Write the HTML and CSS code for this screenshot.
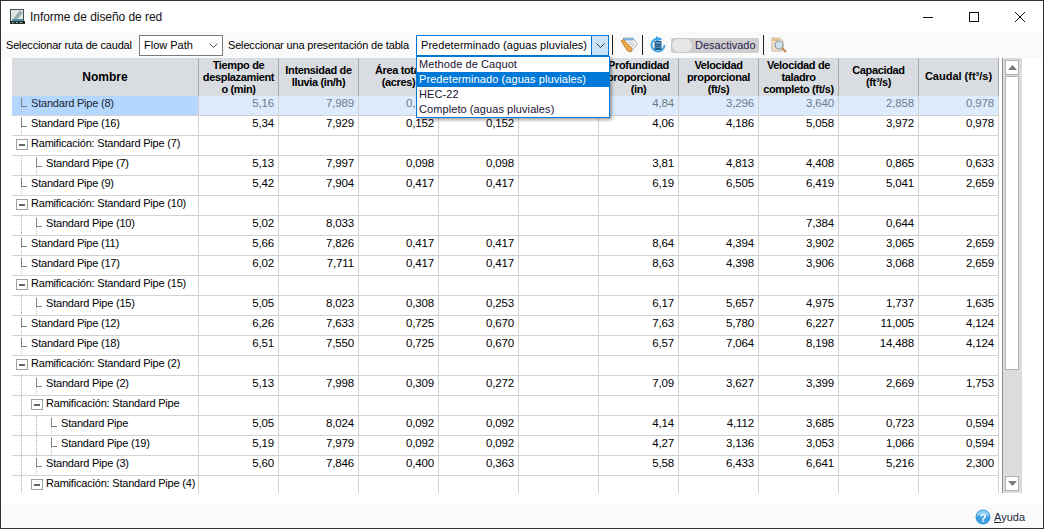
FILE: index.html
```html
<!DOCTYPE html>
<html lang="es">
<head>
<meta charset="utf-8">
<title>Informe de diseño de red</title>
<link rel="stylesheet" href="styles.css">
</head>
<body>
<div class="window">
  <header class="titlebar">
    <svg class="appicon" width="16" height="16" viewBox="0 0 16 16"><rect x=".5" y=".5" width="13" height="14" fill="#dfe4e4" stroke="#4a4f50"/><path d="M3 11 10 2l2 2-6 7z" fill="#9fb2b8" stroke="#6c7a80" stroke-width=".6"/><rect x="2" y="10" width="11" height="2" fill="#4f93a8"/><rect x="0" y="12" width="15" height="3" fill="#26302f"/><path d="M2 13.500h2m2 0h2m2 0h2" stroke="#8fb09c"/></svg>
    <span class="title">Informe de diseño de red</span>
    <div class="winctl">
      <span class="wbtn"><svg width="12" height="12" viewBox="0 0 12 12"><path d="M1 6.500h10" stroke="#111"/></svg></span>
      <span class="wbtn"><svg width="12" height="12" viewBox="0 0 12 12"><rect x="1.500" y="1.500" width="9" height="9" fill="none" stroke="#111"/></svg></span>
      <span class="wbtn"><svg width="12" height="12" viewBox="0 0 12 12"><path d="M1 1l10 10M11 1 1 11" stroke="#111"/></svg></span>
    </div>
  </header>
  <div class="toolbar">
    <span class="lbl l1">Seleccionar ruta de caudal</span>
    <div class="combo c1"><span>Flow Path</span><svg width="9" height="5" viewBox="0 0 9 5"><path d="M.5.500 4.500 4.500 8.500.500" fill="none" stroke="#555"/></svg></div>
    <span class="lbl l2">Seleccionar una presentación de tabla</span>
    <div class="combo c2"><span class="cval">Predeterminado (aguas pluviales)</span><b class="arrow"><svg width="9" height="5" viewBox="0 0 9 5"><path d="M.5.500 4.500 4.500 8.500.500" fill="none" stroke="#333"/></svg></b></div>
    <i class="sep s1"></i>
    <svg class="ico i1" width="18" height="18" viewBox="0 0 18 18"><path d="M3 2h10l4.500 6-5.500 7-5-2z" fill="#f6f4ee" stroke="#a9a99e" stroke-width=".8"/><path d="M3 2h10l1.500 2.500H4z" fill="#7fb2dc"/><path d="M8 6.500h6M9.500 8.500h5.500M11 10.500h3" stroke="#b8c4cf" stroke-width=".8"/><path d="M1 5l2.500-1.500L12 12.500l-1 3.500-3.500-1z" fill="#eda94a" stroke="#b36d22" stroke-width=".7"/></svg>
    <i class="sep s2"></i>
    <svg class="ico i2" width="16" height="18" viewBox="0 0 16 18"><path d="M11.500 3.500A6.500 6.500 0 1 0 14.500 9" fill="none" stroke="#3fa3e6" stroke-width="2"/><path d="M6 0l5 3.500-5 2.500z" fill="#3fa3e6"/><rect x="4.500" y="5" width="7" height="9" fill="#1f5c8c"/><path d="M5.500 7h5" stroke="#a9d0ea"/><path d="M5.500 9.500h5M5.500 11.500h5" stroke="#7fb0d0" stroke-dasharray="1 1"/></svg>
    <div class="toggle"><span class="knob"></span><span class="tlabel">Desactivado</span></div>
    <i class="sep s3"></i>
    <svg class="ico i3" width="18" height="18" viewBox="0 0 18 18"><path d="M2 2h8l3 3v10H2z" fill="#f2e4cf" stroke="#c4a988" stroke-width=".8"/><path d="M3 4h6" stroke="#e2b06e" stroke-width="1.500"/><circle cx="9" cy="9" r="4" fill="#cfe4ea" stroke="#8d9ba3" stroke-width="1.200"/><path d="M12 12l4 4" stroke="#c08a50" stroke-width="2"/></svg>
  </div>
  <div class="content">
    <div class="gridwrap">
      <table class="grid">
        <colgroup><col class="cn"><col class="cv"><col class="cv"><col class="cv"><col class="cv"><col class="cv"><col class="cv"><col class="cv"><col class="cv"><col class="cv"><col class="cv"></colgroup>
        <thead><tr>
          <th class="hn">Nombre</th><th class="h3">Tiempo de desplazamient o (min)</th><th>Intensidad de lluvia (in/h)</th><th>Área total (acres)</th><th></th><th></th><th class="h3">Profundidad proporcional (in)</th><th class="h3">Velocidad proporcional (ft/s)</th><th class="h3">Velocidad de taladro completo (ft/s)</th><th>Capacidad (ft³/s)</th><th class="hc">Caudal (ft³/s)</th>
        </tr></thead>
        <tbody>
          <tr class="sel"><td class="n"><div class="tree"><i class="el"></i>Standard Pipe (8)</div></td><td>5,16</td><td>7,989</td><td>0,152</td><td></td><td></td><td>4,84</td><td>3,296</td><td>3,640</td><td>2,858</td><td>0,978</td></tr>
          <tr><td class="n"><div class="tree"><i class="el"></i>Standard Pipe (16)</div></td><td>5,34</td><td>7,929</td><td>0,152</td><td>0,152</td><td></td><td>4,06</td><td>4,186</td><td>5,058</td><td>3,972</td><td>0,978</td></tr>
          <tr><td class="n"><div class="tree"><i class="mn"></i>Ramificación: Standard Pipe (7)</div></td><td></td><td></td><td></td><td></td><td></td><td></td><td></td><td></td><td></td><td></td></tr>
          <tr><td class="n"><div class="tree"><i class="dt"></i><i class="el"></i>Standard Pipe (7)</div></td><td>5,13</td><td>7,997</td><td>0,098</td><td>0,098</td><td></td><td>3,81</td><td>4,813</td><td>4,408</td><td>0,865</td><td>0,633</td></tr>
          <tr><td class="n"><div class="tree"><i class="el"></i>Standard Pipe (9)</div></td><td>5,42</td><td>7,904</td><td>0,417</td><td>0,417</td><td></td><td>6,19</td><td>6,505</td><td>6,419</td><td>5,041</td><td>2,659</td></tr>
          <tr><td class="n"><div class="tree"><i class="mn"></i>Ramificación: Standard Pipe (10)</div></td><td></td><td></td><td></td><td></td><td></td><td></td><td></td><td></td><td></td><td></td></tr>
          <tr><td class="n"><div class="tree"><i class="dt"></i><i class="el"></i>Standard Pipe (10)</div></td><td>5,02</td><td>8,033</td><td></td><td></td><td></td><td></td><td></td><td>7,384</td><td>0,644</td><td></td></tr>
          <tr><td class="n"><div class="tree"><i class="el"></i>Standard Pipe (11)</div></td><td>5,66</td><td>7,826</td><td>0,417</td><td>0,417</td><td></td><td>8,64</td><td>4,394</td><td>3,902</td><td>3,065</td><td>2,659</td></tr>
          <tr><td class="n"><div class="tree"><i class="el"></i>Standard Pipe (17)</div></td><td>6,02</td><td>7,711</td><td>0,417</td><td>0,417</td><td></td><td>8,63</td><td>4,398</td><td>3,906</td><td>3,068</td><td>2,659</td></tr>
          <tr><td class="n"><div class="tree"><i class="mn"></i>Ramificación: Standard Pipe (15)</div></td><td></td><td></td><td></td><td></td><td></td><td></td><td></td><td></td><td></td><td></td></tr>
          <tr><td class="n"><div class="tree"><i class="dt"></i><i class="el"></i>Standard Pipe (15)</div></td><td>5,05</td><td>8,023</td><td>0,308</td><td>0,253</td><td></td><td>6,17</td><td>5,657</td><td>4,975</td><td>1,737</td><td>1,635</td></tr>
          <tr><td class="n"><div class="tree"><i class="el"></i>Standard Pipe (12)</div></td><td>6,26</td><td>7,633</td><td>0,725</td><td>0,670</td><td></td><td>7,63</td><td>5,780</td><td>6,227</td><td>11,005</td><td>4,124</td></tr>
          <tr><td class="n"><div class="tree"><i class="el"></i>Standard Pipe (18)</div></td><td>6,51</td><td>7,550</td><td>0,725</td><td>0,670</td><td></td><td>6,57</td><td>7,064</td><td>8,198</td><td>14,488</td><td>4,124</td></tr>
          <tr><td class="n"><div class="tree"><i class="mn"></i>Ramificación: Standard Pipe (2)</div></td><td></td><td></td><td></td><td></td><td></td><td></td><td></td><td></td><td></td><td></td></tr>
          <tr><td class="n"><div class="tree"><i class="dt"></i><i class="el"></i>Standard Pipe (2)</div></td><td>5,13</td><td>7,998</td><td>0,309</td><td>0,272</td><td></td><td>7,09</td><td>3,627</td><td>3,399</td><td>2,669</td><td>1,753</td></tr>
          <tr><td class="n"><div class="tree"><i class="dt"></i><i class="mn"></i>Ramificación: Standard Pipe</div></td><td></td><td></td><td></td><td></td><td></td><td></td><td></td><td></td><td></td><td></td></tr>
          <tr><td class="n"><div class="tree"><i class="dt"></i><i class="dt"></i><i class="el"></i>Standard Pipe</div></td><td>5,05</td><td>8,024</td><td>0,092</td><td>0,092</td><td></td><td>4,14</td><td>4,112</td><td>3,685</td><td>0,723</td><td>0,594</td></tr>
          <tr><td class="n"><div class="tree"><i class="dt"></i><i class="dt"></i><i class="el"></i>Standard Pipe (19)</div></td><td>5,19</td><td>7,979</td><td>0,092</td><td>0,092</td><td></td><td>4,27</td><td>3,136</td><td>3,053</td><td>1,066</td><td>0,594</td></tr>
          <tr><td class="n"><div class="tree"><i class="dt"></i><i class="el"></i>Standard Pipe (3)</div></td><td>5,60</td><td>7,846</td><td>0,400</td><td>0,363</td><td></td><td>5,58</td><td>6,433</td><td>6,641</td><td>5,216</td><td>2,300</td></tr>
          <tr><td class="n"><div class="tree"><i class="dt"></i><i class="mn"></i>Ramificación: Standard Pipe (4)</div></td><td></td><td></td><td></td><td></td><td></td><td></td><td></td><td></td><td></td><td></td></tr>
        </tbody>
      </table>
    </div>
    <div class="scrollbar">
      <span class="sbtn"><svg width="9" height="5" viewBox="0 0 9 5"><path d="M4.500 0 9 5H0z" fill="#7a7a7a"/></svg></span>
      <span class="thumb"></span>
      <span class="strack"></span>
      <span class="sbtn"><svg width="9" height="5" viewBox="0 0 9 5"><path d="M0 0h9L4.500 5z" fill="#7a7a7a"/></svg></span>
    </div>
  </div>
  <footer class="footer">
    <svg width="16" height="16" viewBox="0 0 16 16"><circle cx="8" cy="8" r="7.500" fill="#3f9fe0"/><path d="M2 7a6 5.500 0 0 1 12 0c-3-1.500-9-1.500-12 0z" fill="#92d0f4"/><text x="8" y="12.500" class="qm">?</text></svg>
    <span class="help"><u>A</u>yuda</span>
  </footer>
  <ul class="droplist">
    <li>Methode de Caquot</li>
    <li class="on">Predeterminado (aguas pluviales)</li>
    <li>HEC-22</li>
    <li>Completo (aguas pluviales)</li>
  </ul>
</div>
</body>
</html>
```
FILE: styles.css
```css
* { box-sizing: border-box; }
html, body { margin: 0; padding: 0; }
body { width: 1044px; height: 529px; overflow: hidden; font-family: "Liberation Sans", Arial, sans-serif; font-size: 11px; color: #000; }
.window { position: relative; width: 1044px; height: 529px; border: 1px solid #333; background: #fff; display: flex; flex-direction: column; }
.titlebar { height: 31px; flex: none; display: flex; align-items: center; background: #fff; padding-left: 9px; }
.appicon { margin-right: 4px; }
.title { font-size: 12px; letter-spacing: -.05px; color: #111; }
.winctl { margin-left: auto; display: flex; }
.wbtn { width: 46px; height: 30px; display: flex; align-items: center; justify-content: center; }
.toolbar { height: 26px; flex: none; background: #fafafa; display: flex; align-items: center; padding-left: 5px; }
.lbl { white-space: nowrap; letter-spacing: -.17px; flex: none; }
.l1 { width: 126px; }
.l2 { width: 181px; margin-left: 5px; }
.combo { height: 21px; background: #fff; border: 1px solid #7a7a7a; display: flex; align-items: center; justify-content: space-between; white-space: nowrap; flex: none; }
.c1 { width: 84px; margin-left: 7px; padding: 0 4px; }
.c2 { width: 193px; margin-left: 7px; border-color: #0078d7; padding-left: 4px; }
.cval { letter-spacing: .05px; }
.arrow { width: 17px; height: 19px; background: #cce4f7; border-left: 1px solid #0078d7; display: flex; align-items: center; justify-content: center; }
.sep { width: 1px; height: 20px; background: #222; flex: none; }
.ico { flex: none; }
.s1 { margin-left: 3px; }
.i1 { margin-left: 7px; }
.s2 { margin-left: 4px; }
.i2 { margin-left: 7px; }
.toggle { width: 88px; height: 15px; margin-left: 5px; background: #cfcfcf; display: flex; align-items: center; border-radius: 2px; flex: none; }
.knob { width: 22px; height: 15px; background: #e6e6e6; border: 1px solid #c4c4c4; border-radius: 8px; flex: none; }
.tlabel { margin-left: 2px; color: #2a1a50; }
.s3 { margin-left: 4px; }
.i3 { margin-left: 6px; }
.content { height: 447px; flex: none; display: flex; padding-left: 11px; background: #fff; }
.gridwrap { width: 987px; height: 435px; overflow: hidden; flex: none; }
.grid { border-collapse: separate; border-spacing: 0; table-layout: fixed; width: 987px; }
.cn { width: 187px; }
.cv { width: 80px; }
.grid th { height: 38px; background: #d9dde1; border-right: 1px solid #a8a8a8; font-size: 11px; line-height: 12px; letter-spacing: -.35px; font-weight: bold; padding: 0 0 2px; text-align: center; overflow: hidden; overflow-wrap: anywhere; vertical-align: middle; }
.grid th.h3 { padding: 0 0 1px; }
.grid th.hn { font-size: 12px; letter-spacing: 0; padding: 0 0 1px; }
.grid th.hc { letter-spacing: 0; padding: 0 0 2px; }
.grid td { height: 20px; padding: 0 4px 0 0; line-height: 14px; vertical-align: top; border-right: 1px solid #d2d2d2; border-bottom: 1px solid #d2d2d2; text-align: right; background: #fff; white-space: nowrap; font-size: 11.500px; letter-spacing: -.15px; }
.grid td.n { text-align: left; padding: 0; font-size: 11px; letter-spacing: -.2px; }
.tree { display: flex; align-items: flex-start; height: 19px; padding-left: 4px; }
.tree i { flex: none; display: block; }
.el { width: 15px; height: 19px; background: linear-gradient(#808080,#808080) 5px 2px/1px 9px no-repeat, linear-gradient(#808080,#808080) 5px 10px/6px 1px no-repeat, linear-gradient(#bbb 50%, transparent 50%) 5px 11px/1px 2px repeat-y; }
.mn { width: 12px; height: 11px; margin: 3px 3px 0 0; border: 1px solid #a0a0a0; background: linear-gradient(#666,#666) center/6px 2px no-repeat #fff; }
.dt { width: 15px; height: 19px; background: linear-gradient(#aaa 50%, transparent 50%) 5px 0/1px 2px repeat-y; }
.sel td { background: #ddecfd; color: #707a85; }
.sel td.n { background: #b3d7ff; color: #1a2530; }
.scrollbar { width: 20px; margin-left: 3px; height: 435px; background: #dcdcdc; display: flex; flex-direction: column; border-left: 1px solid #8c8c8c; flex: none; padding: 2px 3px 2px 2px; }
.sbtn { height: 15px; flex: none; background: #fff; border: 1px solid #b0b0b0; display: flex; align-items: center; justify-content: center; }
.thumb { height: 294px; flex: none; background: #fff; border: 1px solid #b0b0b0; margin-top: 1px; }
.strack { flex: 1; }
.footer { flex: 1; background: #fafafa; display: flex; align-items: center; justify-content: flex-end; padding-right: 18px; gap: 3px; }
.qm { font: bold 11px "Liberation Sans", sans-serif; fill: #fff; text-anchor: middle; }
.help { color: #1a2a40; }
.droplist { position: absolute; left: 415px; top: 55px; width: 194px; height: 62px; margin: 0; padding: 0; list-style: none; background: #fff; border: 1px solid #0078d7; box-shadow: 2px 2px 3px rgba(0,0,0,.35); z-index: 2; }
.droplist li { height: 15px; line-height: 15px; padding-left: 2px; white-space: nowrap; color: #1a1230; letter-spacing: .08px; }
.droplist li.on { background: #0078d7; color: #fff; }
```
